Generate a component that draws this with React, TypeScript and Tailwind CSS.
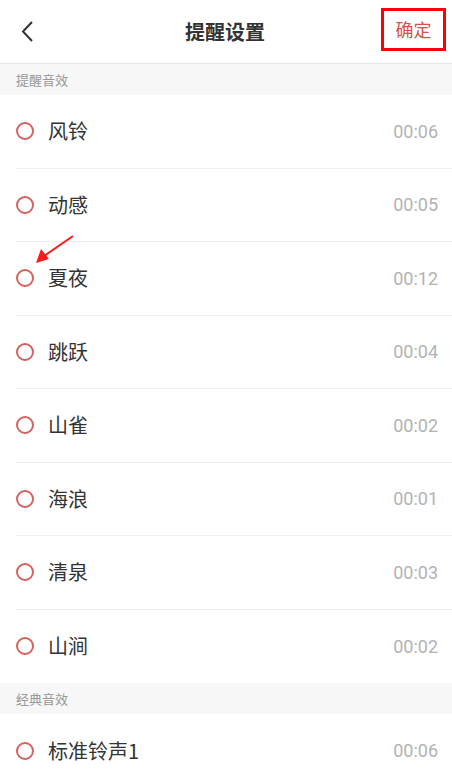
import React from 'react';

const font = { fontFamily: '"Noto Sans CJK SC", Roboto, sans-serif' };

interface Sound {
  name: string;
  time: string;
}

const remind: Sound[] = [
  { name: '风铃', time: '00:06' },
  { name: '动感', time: '00:05' },
  { name: '夏夜', time: '00:12' },
  { name: '跳跃', time: '00:04' },
  { name: '山雀', time: '00:02' },
  { name: '海浪', time: '00:01' },
  { name: '清泉', time: '00:03' },
  { name: '山涧', time: '00:02' },
];

const classic: Sound[] = [{ name: '标准铃声1', time: '00:06' }];

const SectionTitle: React.FC<{ title: string }> = ({ title }) => (
  <div className="h-[31px] bg-[#f7f7f7] pl-4 flex items-center text-[13px] text-[#999]">
    {title}
  </div>
);

const Row: React.FC<{ item: Sound; last: boolean }> = ({ item, last }) => (
  <div className="pl-4">
    <div
      className={`h-[73.5px] flex items-center pr-[14px] ${
        last ? '' : 'border-b border-[#eeeeee]'
      }`}
    >
      <span className="w-[18px] h-[18px] rounded-full border-2 border-[#d4625f] shrink-0" />
      <span className="ml-[14px] text-[20px] text-[#333] flex-1">{item.name}</span>
      <span className="text-[18px] text-[#b3b3b3] font-['Roboto']">{item.time}</span>
    </div>
  </div>
);

export default function App() {
  return (
    <div className="w-[452px] h-[783px] bg-white overflow-hidden relative" style={font}>
      <div className="h-[64px] border-b border-[#e5e5e5] flex items-center justify-between pl-[16px] pr-[6px]">
        <svg width="24" height="24" viewBox="0 0 24 24" className="ml-[1px]">
          <path d="M15 2 L6 11.5 L15 21" fill="none" stroke="#333" strokeWidth="2" />
        </svg>
        <h1 className="text-[20px] font-bold text-[#333] ml-[28px]">提醒设置</h1>
        <div className="w-[65px] h-[43px] border-[3px] border-[#ff0000] flex items-center justify-center text-[18px] text-[#d4514d] mb-[5px]">
          确定
        </div>
      </div>
      <SectionTitle title="提醒音效" />
      {remind.map((s, i) => (
        <Row key={s.name} item={s} last={i === remind.length - 1} />
      ))}
      <SectionTitle title="经典音效" />
      {classic.map((s) => (
        <Row key={s.name} item={s} last />
      ))}
      <svg className="absolute left-0 top-0" width="452" height="783" pointerEvents="none">
        <line x1="73" y1="236" x2="44" y2="256" stroke="#ff1a1a" strokeWidth="2" />
        <polygon points="36,263 41,249 49,259" fill="#ff1a1a" />
      </svg>
    </div>
  );
}
